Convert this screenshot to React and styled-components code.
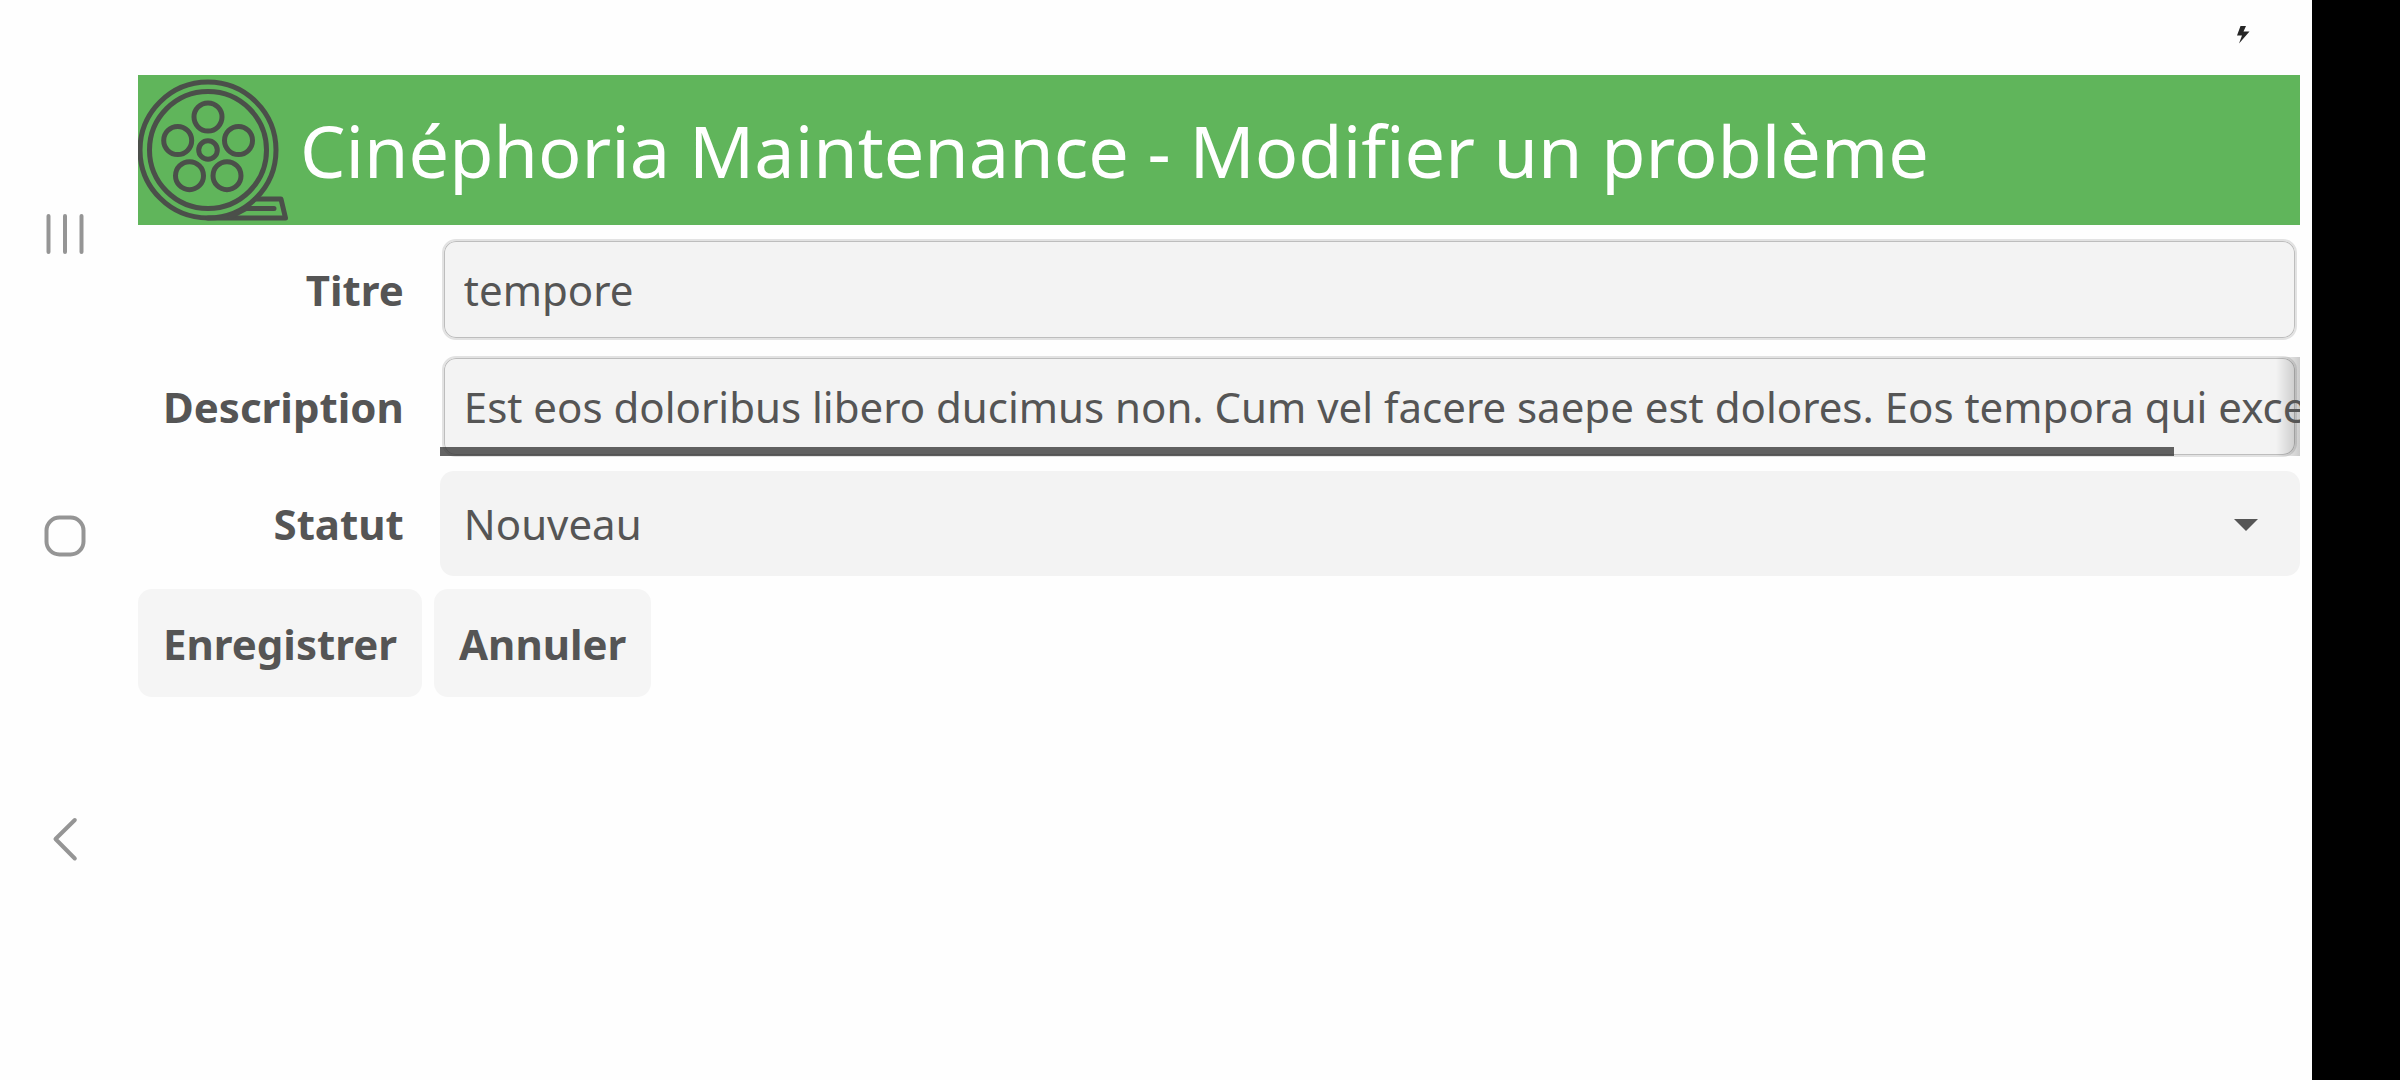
import React from "react";
import styled, { createGlobalStyle } from "styled-components";

const Global = createGlobalStyle`
  *, *::before, *::after { box-sizing: border-box; }
  body { margin: 0; background: #fefefe; }
  body, input, select, button {
    font-family: "Noto Sans", "Open Sans", sans-serif;
    font-size: 42px;
    line-height: 57px;
    color: #555555;
  }
`;

const Screen = styled.div`
  display: flex;
  min-height: 100vh;
`;

const NavBar = styled.nav`
  flex: none;
  width: 130px;
  padding-top: 210px;
  display: flex;
  flex-direction: column;
  align-items: center;
  gap: 255px;
`;

const NavButton = styled.button`
  display: block;
  width: 48px;
  height: 48px;
  padding: 0;
  border: 0;
  background: none;

  svg {
    display: block;
    fill: none;
    stroke: #959595;
    stroke-width: 4;
    stroke-linecap: round;
    stroke-linejoin: round;
  }
`;

const Cutout = styled.div`
  flex: none;
  width: 88px;
  background: #000000;
`;

const Content = styled.div`
  flex: 1;
  min-width: 0;
  padding: 0 12px 0 8px;
`;

const StatusBar = styled.div`
  height: 75px;
  display: flex;
  justify-content: flex-end;
  padding: 26px 50px 0 0;
`;

const Header = styled.header`
  display: flex;
  align-items: center;
  gap: 12px;
  background: #60b55b;
`;

const Logo = styled.svg`
  flex: none;
  width: 150px;
  height: 150px;
  fill: none;
  stroke: #4b4f4a;
  stroke-width: 5;
  stroke-linejoin: round;
  stroke-linecap: round;
`;

const Title = styled.h1`
  margin: 0;
  font-size: 72px;
  line-height: 98px;
  font-weight: 400;
  color: #ffffff;
`;

const Form = styled.form`
  padding-top: 12px;
  display: flex;
  flex-direction: column;
  gap: 13px;
`;

const Fields = styled.div`
  display: grid;
  grid-template-columns: auto minmax(0, 1fr);
  grid-auto-rows: 105px;
  align-items: center;
  gap: 12px;
`;

const Label = styled.label`
  padding: 0 24px 0 25px;
  font-weight: 700;
  text-align: right;
`;

const Field = styled.div`
  position: relative;
  height: 105px;
  padding: 2px 3px 2px 2px;
`;

const Frame = styled.div`
  height: 101px;
  border: 2px solid #e2e2e2;
  border-radius: 14px;
  background: #f3f3f3;
  box-shadow: inset 0 0 0 1px #bdbdbd;
`;

const TextInput = styled.input`
  position: absolute;
  inset: 0;
  width: 100%;
  height: 100%;
  padding: 0 0 0 24px;
  border: 0;
  outline: 0;
  background: transparent;
`;

const EdgeShadow = styled.div`
  position: absolute;
  top: 3px;
  right: 0;
  bottom: 3px;
  width: 24px;
  background: linear-gradient(to right, rgba(0, 0, 0, 0), rgba(0, 0, 0, 0.2));
`;

const ScrollBar = styled.div`
  position: absolute;
  left: 0;
  bottom: 3px;
  width: 93.2%;
  height: 9px;
  background: rgba(50, 50, 50, 0.76);
`;

const SelectBox = styled.div`
  position: relative;

  svg {
    position: absolute;
    right: 42px;
    top: 48px;
    fill: #555555;
    pointer-events: none;
  }
`;

const Select = styled.select`
  display: block;
  width: 100%;
  height: 105px;
  padding: 0 24px;
  border: 0;
  border-radius: 14px;
  appearance: none;
  background: #f3f3f3;
`;

const Actions = styled.div`
  display: flex;
  gap: 12px;
`;

const Button = styled.button`
  height: 108px;
  padding: 0 25px;
  border: 0;
  border-radius: 14px;
  background: #f5f5f5;
  font-weight: 700;
`;

function ReelLogo() {
  return (
    <Logo viewBox="0 0 150 150" aria-hidden="true">
      <circle cx="70" cy="75" r="68" />
      <circle cx="70" cy="75" r="58.5" />
      <circle cx="70" cy="75" r="9.3" />
      <circle cx="70" cy="42" r="14" />
      <circle cx="39.7" cy="65.5" r="14" />
      <circle cx="100.5" cy="65.5" r="14" />
      <circle cx="51.5" cy="100.7" r="14" />
      <circle cx="89" cy="100.7" r="14" />
      <path d="M70 143H147.500L143 124H118" />
      <path d="M108 133.500H136M92 142L108 133.500" />
    </Logo>
  );
}

export default function App() {
  return (
    <>
      <Global />
      <Screen>
        <NavBar>
          <NavButton aria-label="Applications récentes">
            <svg width="48" height="48" viewBox="0 0 48 48">
              <path d="M7.500 6V42M24 6V42M40.500 6V42" />
            </svg>
          </NavButton>
          <NavButton aria-label="Accueil">
            <svg width="48" height="48" viewBox="0 0 48 48">
              <rect x="5.500" y="4.500" width="37" height="37" rx="13" />
            </svg>
          </NavButton>
          <NavButton aria-label="Retour">
            <svg width="48" height="48" viewBox="0 0 48 48">
              <path d="M33.800 4L14.500 23L33.800 42.500" />
            </svg>
          </NavButton>
        </NavBar>
        <Content>
          <StatusBar>
            <svg width="14" height="19" viewBox="0 0 14 19" aria-hidden="true">
              <path d="M4.500 0H10L7.500 5.500H13.500L3 17.500L6 9.500H1Z" fill="#262626" />
            </svg>
          </StatusBar>
          <Header>
            <ReelLogo />
            <Title>Cinéphoria Maintenance - Modifier un problème</Title>
          </Header>
          <Form onSubmit={(e) => e.preventDefault()}>
            <Fields>
              <Label htmlFor="titre">Titre</Label>
              <Field>
                <Frame />
                <TextInput id="titre" defaultValue="tempore" />
              </Field>
              <Label htmlFor="description">Description</Label>
              <Field>
                <Frame />
                <EdgeShadow />
                <TextInput
                  id="description"
                  defaultValue="Est eos doloribus libero ducimus non. Cum vel facere saepe est dolores. Eos tempora qui excepturi"
                />
                <ScrollBar />
              </Field>
              <Label htmlFor="statut">Statut</Label>
              <SelectBox>
                <Select id="statut" defaultValue="Nouveau">
                  <option>Nouveau</option>
                </Select>
                <svg width="24" height="12" viewBox="0 0 24 12" aria-hidden="true">
                  <path d="M0 0H24L12 12Z" />
                </svg>
              </SelectBox>
            </Fields>
            <Actions>
              <Button type="submit">Enregistrer</Button>
              <Button type="button">Annuler</Button>
            </Actions>
          </Form>
        </Content>
        <Cutout />
      </Screen>
    </>
  );
}
